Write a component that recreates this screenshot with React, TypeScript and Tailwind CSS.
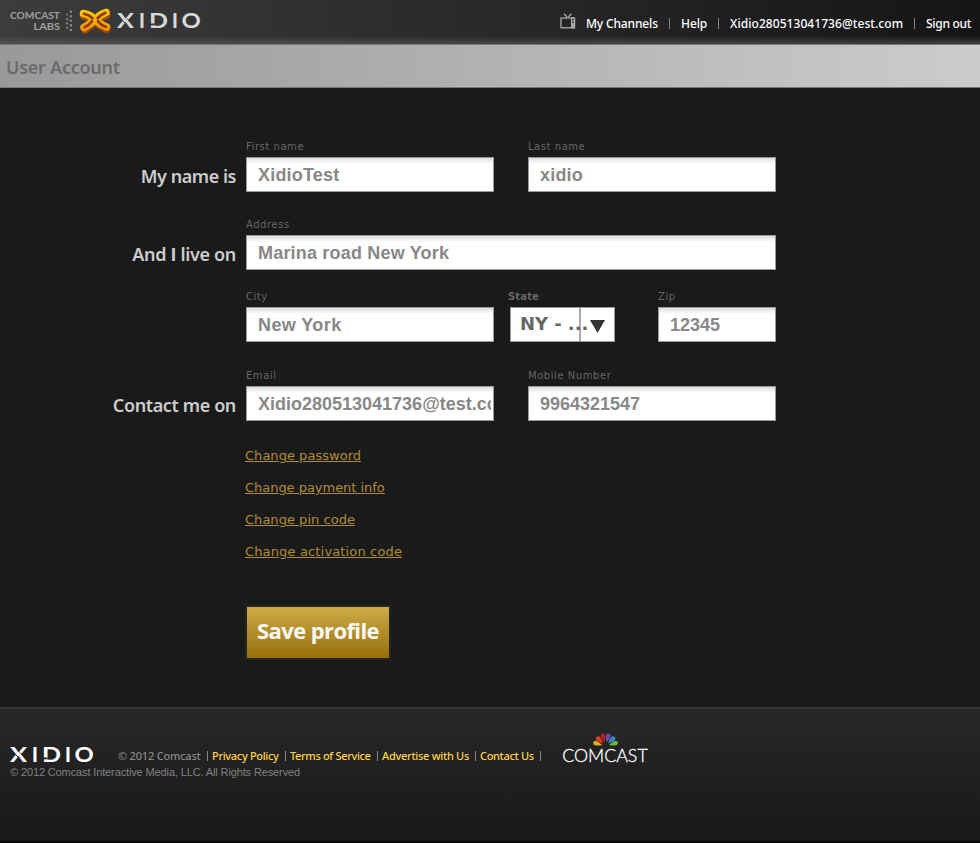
import type { ReactNode } from "react";

const noto = "font-['Noto_Sans','Open_Sans',sans-serif]";
const open = "font-['Open_Sans','Noto_Sans',sans-serif]";
const verdana = "font-['DejaVu_Sans',Verdana,sans-serif]";
const arial = "font-['Liberation_Sans',Arial,sans-serif]";

function Field({ label, value, width, tracking = "" }: { label: string; value: string; width: string; tracking?: string }) {
  return (
    <div className={`flex flex-col gap-1 ${width}`}>
      <label className={`${verdana} h-[13px] whitespace-nowrap text-[10px] leading-[13px] tracking-[0.55px] text-[#666]`}>{label}</label>
      <div className="h-[35px] border border-[#999] bg-white bg-linear-to-b from-[#dedede] to-white to-[6px] pr-[2px] pl-[11px]">
        <div className={`${arial} ${tracking} h-[33px] overflow-hidden pt-px whitespace-nowrap text-[18px] leading-[33px] font-bold text-[#888]`}>{value}</div>
      </div>
    </div>
  );
}

function Row({ title, tracking = "", className, children }: { title?: ReactNode; tracking?: string; className?: string; children: ReactNode }) {
  return (
    <div className={`flex h-[52px] ${className ?? ""}`}>
      <h2 className={`${noto} ${tracking} w-[246px] pt-[20px] pr-[10px] text-right text-[18px] leading-[33px] font-semibold text-[#ccc]`}>{title}</h2>
      {children}
    </div>
  );
}

function Wordmark({ color, cut, className }: { color: string; cut: string; className: string }) {
  return (
    <svg viewBox="0 0 84 17" className={`overflow-visible ${className}`}>
      <g fill={color} fontFamily="Lato, sans-serif" fontSize="21.5" fontWeight="700">
        <text y="16" textLength="17" lengthAdjust="spacingAndGlyphs">X</text>
        <text x="21.7" y="16">I</text>
        <text x="32" y="16" textLength="19" lengthAdjust="spacingAndGlyphs">D</text>
        <text x="54.7" y="16">I</text>
        <text x="64.5" y="16" textLength="19.3" lengthAdjust="spacingAndGlyphs">O</text>
      </g>
      <path d="M10 6.5 L13 9.6 M5.5 8.5 L8.5 11.5" stroke={cut} strokeWidth="1" />
      <path d="M32.5 12.4 H37.5" stroke={cut} strokeWidth="1.8" />
    </svg>
  );
}

function CrossLogo() {
  return (
    <svg viewBox="0 0 34 28" className="h-[28px] w-[34px]">
      <defs>
        <linearGradient id="gold" gradientUnits="userSpaceOnUse" x1="0" y1="2" x2="0" y2="25">
          <stop offset="0" stopColor="#ffcf10" />
          <stop offset="1" stopColor="#f58f04" />
        </linearGradient>
      </defs>
      <g fill="none" strokeLinecap="round">
        <path d="M6 10 Q12 11 17 15.5 T28.5 23 M28.5 9 Q22 11 17 15.5 T7 23.5" stroke="#a34c05" strokeWidth="7.8" />
        <path d="M5.5 7.5 Q12 8.5 17 13.5 T28.5 21 M28 6.5 Q22 8.5 17 13.5 T6 21.5" stroke="url(#gold)" strokeWidth="7.6" />
        <path d="M6 7.8 Q11 9 14.5 12.2 M20 15.2 Q23 19.3 28 20.8 M27.5 6.8 Q22.5 9 19.7 12 M14 15.3 Q11 19.5 6.5 21.2" stroke="#8a3c08" strokeWidth="2.7" />
      </g>
    </svg>
  );
}

function TvIcon() {
  return (
    <svg viewBox="0 0 16 16" className="h-[16px] w-[16px]">
      <path d="M4 .8 L7 4 M11.5 .8 L8 4" stroke="#aaa" strokeWidth="1.3" fill="none" />
      <path d="M1 5 H14.5 V14.8 H1 Z" fill="none" stroke="#999" strokeWidth="1.5" />
      <path d="M11 4.5 H15 V15.5 H11 Z" fill="#aaa" />
      <path d="M12 6 h2 v1.2 h-2z M12 8.6 h2 v1.2 h-2z" fill="#333" />
    </svg>
  );
}

const petals = [
  { turn: -74, color: "#e3a823" },
  { turn: -45, color: "#dd3a26" },
  { turn: -15, color: "#b01c22" },
  { turn: 15, color: "#6a4fa8" },
  { turn: 45, color: "#3a86cf" },
  { turn: 74, color: "#6fb33b" },
];

function ComcastLogo() {
  return (
    <svg viewBox="0 0 90 36" className="h-[36px] w-[90px] overflow-visible">
      {petals.map((p) => (
        <path key={p.color} d="M0 -3.5 C-1.2 -6 -2.3 -8.5 -2.3 -10.4 C-2.3 -13.6 2.3 -13.6 2.3 -10.4 C2.3 -8.5 1.2 -6 0 -3.5 Z" fill={p.color} transform={`translate(44.6 15) rotate(${p.turn})`} />
      ))}
      <text x="1.2" y="31" textLength="85.5" lengthAdjust="spacingAndGlyphs" fill="#fff" stroke="#fff" strokeWidth="0.3" fontFamily="Lato, sans-serif" fontWeight="300" fontSize="17.5">COMCAST</text>
    </svg>
  );
}

const Bar = ({ className }: { className: string }) => <span className={`w-px bg-[#858585] ${className}`} />;

export default function App() {
  return (
    <div className="flex h-[843px] w-[980px] flex-col overflow-hidden bg-[#1a1a1a]">
      <header className="flex h-[44px] shrink-0 bg-[linear-gradient(to_bottom,transparent_36px,#66666680_44px),linear-gradient(to_right,#3c3c3c,#151515)]">
        <div className="flex h-[40px] pt-[6px]">
          <div className="ml-[10px] flex w-[51px] flex-col pt-[5px]">
            <svg viewBox="0 0 51 20" className="h-[20px] w-[51px] overflow-visible" fill="#a0a0a0" fontFamily="Lato, sans-serif" fontWeight="700" fontSize="9.2">
              <text x="0" y="8.2" textLength="50" lengthAdjust="spacingAndGlyphs">COMCAST</text>
              <text x="23.5" y="18.5" textLength="26.5" lengthAdjust="spacingAndGlyphs">LABS</text>
            </svg>
          </div>
          <svg viewBox="0 0 8 22" className="mt-[4px] ml-[4px] h-[22px] w-[8px]" fill="#858585">
            {[1.8, 6.2, 10.8, 15.4, 20].map((y) => (
              <circle key={y} cx="5.9" cy={y} r="1.3" />
            ))}
            {[4.5, 9.2, 13.4, 17.8].map((y) => (
              <circle key={y} cx="2.1" cy={y} r="1.1" />
            ))}
          </svg>
          <div className="mr-px ml-[5px]"><CrossLogo /></div>
          <Wordmark color="#d8d8d8" cut="#373737" className="mt-[6px] ml-[4px] h-[17px] w-[84px]" />
        </div>
        <nav className={`${noto} flex flex-1 items-center pt-[3px] text-[12px] leading-[17px] font-medium whitespace-nowrap text-white`}>
          <div className="-mt-[6px] ml-[359px] w-[26px]"><TvIcon /></div>
          <a className="w-[83px] tracking-[-0.15px]">My Channels</a>
          <Bar className="h-[11px]" />
          <a className="ml-[11px] w-[37px] tracking-[-0.1px]">Help</a>
          <Bar className="h-[11px]" />
          <a className="ml-[11px] w-[184px] tracking-[0.06px]">Xidio280513041736@test.com</a>
          <Bar className="h-[11px]" />
          <a className="ml-[11px] tracking-[-0.3px]">Sign out</a>
        </nav>
      </header>
      <div className="h-[44px] shrink-0 border-t border-b border-t-[#777] border-b-[#777] bg-linear-to-r from-[#999] to-[#ccc] pl-[6px]">
        <h1 className={`${noto} text-[18px] leading-[45px] font-semibold tracking-[-0.26px] text-[#6b6b6b]`}>User Account</h1>
      </div>
      <main className="flex h-[619px] shrink-0 flex-col pt-[52px]">
        <Row title="My name is" tracking="tracking-[-0.46px]">
          <Field label="First name" value="XidioTest" width="w-[248px]" tracking="tracking-[0.19px]" />
          <div className="w-[34px]" />
          <Field label="Last name" value="xidio" width="w-[248px]" tracking="tracking-[0.19px]" />
        </Row>
        <Row title={<>And <span className="font-['Open_Sans'] font-bold">I</span> live on</>} tracking="tracking-[-0.33px]" className="mt-[26px]">
          <Field label="Address" value="Marina road New York" width="w-[530px]" tracking="tracking-[0.19px]" />
        </Row>
        <Row className="mt-[20px]">
          <Field label="City" value="New York" width="w-[248px]" tracking="tracking-[0.4px]" />
          <div className="ml-[14px] flex w-[107px] flex-col gap-1">
            <label className={`${verdana} text-[10px] leading-[13px] font-bold tracking-[0.14px] text-[#666]`}>State</label>
            <div className="ml-[2px] flex h-[35px] w-[105px] border border-[#999] bg-white">
              <div className={`${verdana} w-[70px] border-r-2 border-[#aaa] pl-[9px] text-[18px] leading-[32px] font-bold tracking-[-0.05px] whitespace-nowrap text-[#666]`}>NY - ...</div>
              <svg viewBox="0 0 15 13" className="mt-[12px] ml-[8.5px] h-[13px] w-[15px]"><path d="M0 0 H15 L7.5 13 Z" fill="#333" /></svg>
            </div>
          </div>
          <div className="w-[43px]" />
          <Field label="Zip" value="12345" width="w-[118px]" />
        </Row>
        <Row title="Contact me on" tracking="tracking-[-0.37px]" className="mt-[27px]">
          <Field label="Email" value="Xidio280513041736@test.com" width="w-[248px]" />
          <div className="w-[34px]" />
          <Field label="Mobile Number" value="9964321547" width="w-[248px]" />
        </Row>
        <div className={`${verdana} mt-[19px] ml-[245px] flex flex-col items-start text-[13px] leading-[32px] text-[#b08c35] underline`}>
          <a className="tracking-[0.03px]">Change password</a>
          <a className="tracking-[-0.03px]">Change payment info</a>
          <a className="tracking-[0.03px]">Change pin code</a>
          <a className="tracking-[0.15px]">Change activation code</a>
        </div>
        <button className={`${open} mt-[37px] ml-[245px] h-[55px] w-[146px] border-2 border-[#242424] bg-linear-to-b from-[#cfae47] to-[#966e02] bg-origin-border pb-[6px] text-[22px] leading-[30px] font-bold tracking-[-0.6px] whitespace-nowrap text-[#f8f8f8]`}>Save profile</button>
      </main>
      <footer className="flex h-[134px] shrink-0 border-t-2 border-[#333] bg-linear-to-b from-[#282828] to-[#181818] shadow-[0_2px_0_#080808]">
        <div className="ml-[10px] w-[532px] pt-[36px]">
          <div className={`${noto} flex h-[21px] text-[11px] leading-[22px] font-medium whitespace-nowrap text-[#ffd247]`}>
            <Wordmark color="#fff" cut="#212121" className="mt-[1px] h-[17px] w-[84px]" />
            <span className="ml-[24px] w-[89px] tracking-[-0.2px] text-[#888]">© 2012 Comcast</span>
            <Bar className="mt-[6px] h-[10px]" />
            <a className="ml-[4px] w-[73px] tracking-[-0.32px]">Privacy Policy</a>
            <Bar className="mt-[6px] h-[10px]" />
            <a className="ml-[4px] w-[87px] tracking-[-0.34px]">Terms of Service</a>
            <Bar className="mt-[6px] h-[10px]" />
            <a className="ml-[4px] w-[93px] tracking-[-0.28px]">Advertise with Us</a>
            <Bar className="mt-[6px] h-[10px]" />
            <a className="ml-[4px] w-[60px] tracking-[-0.33px]">Contact Us</a>
            <Bar className="mt-[6px] h-[10px]" />
          </div>
          <p className={`${arial} text-[11px] leading-[12px] tracking-[-0.126px] whitespace-nowrap text-[#808080]`}>© 2012 Comcast Interactive Media, LLC. All Rights Reserved</p>
        </div>
        <div className="ml-[19px] pt-[22px]"><ComcastLogo /></div>
      </footer>
    </div>
  );
}
